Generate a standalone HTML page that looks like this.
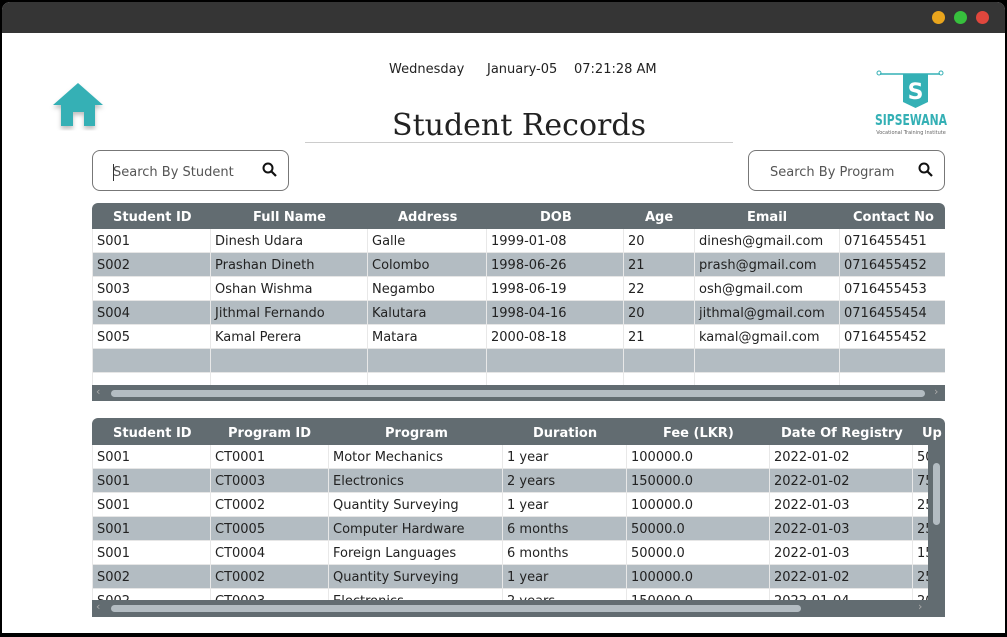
<!DOCTYPE html>
<html><head><meta charset="utf-8"><style>
*{margin:0;padding:0;box-sizing:border-box}
body{width:1007px;height:637px;background:#000;position:relative;overflow:hidden;font-family:"DejaVu Sans","Liberation Sans",sans-serif;font-size:13px;color:#222}
.win{position:absolute;left:2px;top:2px;width:1003px;height:631px;background:#fff;border-radius:8px 8px 0 0;overflow:hidden}
.bar{position:absolute;left:0;top:0;width:100%;height:31px;background:#353535}
.dot{position:absolute;top:9px;width:13px;height:13px;border-radius:50%}
.a{position:absolute}
.tbl{position:absolute;background:#fff;border-radius:6px 6px 0 0;overflow:hidden}
.hd{position:absolute;left:0;top:0;right:0;background:#626c71;color:#fff;font-weight:bold}
.hd span,.row span{position:absolute;top:0;white-space:nowrap}
.row{position:absolute;left:0;right:0;height:24px;border-bottom:1px solid #e6e6e6}
.row.g{background:#b3bcc2}
.row span{line-height:25px;padding-left:4px;border-left:1px solid #e8e8e8;height:24px;overflow:hidden}
.hsb{position:absolute;left:0;right:0;height:17px;background:#626c71}
.thumb{position:absolute;height:7px;top:5px;background:#b3bcc2;border-radius:4px}
.srch{position:absolute;height:41px;border:1px solid #777;border-radius:8px;background:#fff;color:#555}
</style></head><body>
<div class="win">
<div class="bar"></div>
<div class="dot" style="left:930px;background:#e9a51d"></div>
<div class="dot" style="left:952px;background:#37c03d"></div>
<div class="dot" style="left:974px;background:#e0473d"></div>

<div class="a" style="left:387px;top:60px">Wednesday</div>
<div class="a" style="left:485px;top:60px">January-05</div>
<div class="a" style="left:572px;top:60px">07:21:28 AM</div>

<svg class="a" style="left:46px;top:76px" width="64" height="56"><defs><filter id="s"><feDropShadow dx="0" dy="3" stdDeviation="2" flood-opacity="0.25"/></filter></defs>
<path d="M5 27 L30 5 L55 27 L47 27 L47 48 L36 48 L36 34 L25 34 L25 48 L13 48 L13 27 Z" fill="#34b0b5" filter="url(#s)"/></svg>

<div class="a" style="left:300px;top:106px;width:434px;text-align:center;font-family:'DejaVu Serif','Liberation Serif',serif;font-size:30px;color:#222">Student Records</div>
<div class="a" style="left:303px;top:140px;width:428px;height:1px;background:#ccc"></div>

<svg class="a" style="left:868px;top:66px" width="80" height="70">
<path d="M10 6 H70" stroke="#34b0b5" stroke-width="1.5"/><circle cx="9" cy="5" r="2" fill="none" stroke="#34b0b5"/><circle cx="71" cy="5" r="2" fill="none" stroke="#34b0b5"/>
<path d="M33 6 H58 V34 L45.5 40 L33 34 Z" fill="#34b0b5"/>
<text x="45.5" y="31" text-anchor="middle" font-family="DejaVu Sans" font-weight="bold" font-size="22" fill="#fff">S</text>
<text x="5" y="57" font-family="DejaVu Sans" font-weight="bold" font-size="15" fill="#34b0b5" textLength="72" lengthAdjust="spacingAndGlyphs">SIPSEWANA</text>
<text x="41" y="66" text-anchor="middle" font-family="DejaVu Sans" font-size="5" fill="#666">Vocational Training Institute</text>
</svg>

<div class="srch" style="left:90px;top:148px;width:197px"><span class="a" style="left:20px;top:14px">Search By Student</span><span class="a" style="left:20px;top:13px;width:1px;height:17px;background:#333"></span>
<svg class="a" style="left:169px;top:11px" width="16" height="16"><circle cx="6" cy="6" r="4.5" fill="none" stroke="#111" stroke-width="2"/><path d="M9.5 9.5 L14 14" stroke="#111" stroke-width="2.2"/></svg></div>
<div class="srch" style="left:746px;top:148px;width:197px"><span class="a" style="left:21px;top:14px">Search By Program</span>
<svg class="a" style="left:169px;top:11px" width="16" height="16"><circle cx="6" cy="6" r="4.5" fill="none" stroke="#111" stroke-width="2"/><path d="M9.5 9.5 L14 14" stroke="#111" stroke-width="2.2"/></svg></div>

<!-- table 1 -->
<div class="tbl" style="left:90px;top:201px;width:853px;height:198px">
<div class="hd" style="height:26px">
<span style="left:21px;top:7px">Student ID</span><span style="left:161px;top:7px">Full Name</span><span style="left:306px;top:7px">Address</span><span style="left:448px;top:7px">DOB</span><span style="left:553px;top:7px">Age</span><span style="left:655px;top:7px">Email</span><span style="left:761px;top:7px">Contact No</span></div>
<div class="row" style="top:26px"><span style="left:0;width:118px">S001</span><span style="left:118px;width:157px">Dinesh Udara</span><span style="left:275px;width:119px">Galle</span><span style="left:394px;width:137px">1999-01-08</span><span style="left:531px;width:71px">20</span><span style="left:602px;width:145px">dinesh@gmail.com</span><span style="left:747px;width:120px">0716455451</span></div>
<div class="row g" style="top:50px"><span style="left:0;width:118px">S002</span><span style="left:118px;width:157px">Prashan Dineth</span><span style="left:275px;width:119px">Colombo</span><span style="left:394px;width:137px">1998-06-26</span><span style="left:531px;width:71px">21</span><span style="left:602px;width:145px">prash@gmail.com</span><span style="left:747px;width:120px">0716455452</span></div>
<div class="row" style="top:74px"><span style="left:0;width:118px">S003</span><span style="left:118px;width:157px">Oshan Wishma</span><span style="left:275px;width:119px">Negambo</span><span style="left:394px;width:137px">1998-06-19</span><span style="left:531px;width:71px">22</span><span style="left:602px;width:145px">osh@gmail.com</span><span style="left:747px;width:120px">0716455453</span></div>
<div class="row g" style="top:98px"><span style="left:0;width:118px">S004</span><span style="left:118px;width:157px">Jithmal Fernando</span><span style="left:275px;width:119px">Kalutara</span><span style="left:394px;width:137px">1998-04-16</span><span style="left:531px;width:71px">20</span><span style="left:602px;width:145px">jithmal@gmail.com</span><span style="left:747px;width:120px">0716455454</span></div>
<div class="row" style="top:122px"><span style="left:0;width:118px">S005</span><span style="left:118px;width:157px">Kamal Perera</span><span style="left:275px;width:119px">Matara</span><span style="left:394px;width:137px">2000-08-18</span><span style="left:531px;width:71px">21</span><span style="left:602px;width:145px">kamal@gmail.com</span><span style="left:747px;width:120px">0716455452</span></div>
<div class="row g" style="top:146px"><span style="left:0;width:118px"></span><span style="left:118px;width:157px"></span><span style="left:275px;width:119px"></span><span style="left:394px;width:137px"></span><span style="left:531px;width:71px"></span><span style="left:602px;width:145px"></span><span style="left:747px;width:120px"></span></div>
<div class="row" style="top:170px"><span style="left:0;width:118px"></span><span style="left:118px;width:157px"></span><span style="left:275px;width:119px"></span><span style="left:394px;width:137px"></span><span style="left:531px;width:71px"></span><span style="left:602px;width:145px"></span><span style="left:747px;width:120px"></span></div>
<div class="hsb" style="top:182px"><span class="a" style="left:4px;top:0;color:#aaa;font-size:11px">&lsaquo;</span><div class="thumb" style="left:19px;width:814px"></div><span class="a" style="left:842px;top:0;color:#aaa;font-size:11px">&rsaquo;</span></div>
</div>

<!-- table 2 -->
<div class="tbl" style="left:90px;top:416px;width:853px;height:199px">
<div class="hd" style="height:27px">
<span style="left:21px;top:8px">Student ID</span><span style="left:136px;top:8px">Program ID</span><span style="left:293px;top:8px">Program</span><span style="left:441px;top:8px">Duration</span><span style="left:571px;top:8px">Fee (LKR)</span><span style="left:689px;top:8px">Date Of Registry</span><span style="left:830px;top:8px">Up</span></div>
<div class="row" style="top:27px"><span style="left:0;width:118px">S001</span><span style="left:118px;width:118px">CT0001</span><span style="left:236px;width:174px">Motor Mechanics</span><span style="left:410px;width:124px">1 year</span><span style="left:534px;width:143px">100000.0</span><span style="left:677px;width:143px">2022-01-02</span><span style="left:820px;width:40px">50</span></div>
<div class="row g" style="top:51px"><span style="left:0;width:118px">S001</span><span style="left:118px;width:118px">CT0003</span><span style="left:236px;width:174px">Electronics</span><span style="left:410px;width:124px">2 years</span><span style="left:534px;width:143px">150000.0</span><span style="left:677px;width:143px">2022-01-02</span><span style="left:820px;width:40px">75</span></div>
<div class="row" style="top:75px"><span style="left:0;width:118px">S001</span><span style="left:118px;width:118px">CT0002</span><span style="left:236px;width:174px">Quantity Surveying</span><span style="left:410px;width:124px">1 year</span><span style="left:534px;width:143px">100000.0</span><span style="left:677px;width:143px">2022-01-03</span><span style="left:820px;width:40px">25</span></div>
<div class="row g" style="top:99px"><span style="left:0;width:118px">S001</span><span style="left:118px;width:118px">CT0005</span><span style="left:236px;width:174px">Computer Hardware</span><span style="left:410px;width:124px">6 months</span><span style="left:534px;width:143px">50000.0</span><span style="left:677px;width:143px">2022-01-03</span><span style="left:820px;width:40px">25</span></div>
<div class="row" style="top:123px"><span style="left:0;width:118px">S001</span><span style="left:118px;width:118px">CT0004</span><span style="left:236px;width:174px">Foreign Languages</span><span style="left:410px;width:124px">6 months</span><span style="left:534px;width:143px">50000.0</span><span style="left:677px;width:143px">2022-01-03</span><span style="left:820px;width:40px">15</span></div>
<div class="row g" style="top:147px"><span style="left:0;width:118px">S002</span><span style="left:118px;width:118px">CT0002</span><span style="left:236px;width:174px">Quantity Surveying</span><span style="left:410px;width:124px">1 year</span><span style="left:534px;width:143px">100000.0</span><span style="left:677px;width:143px">2022-01-02</span><span style="left:820px;width:40px">25</span></div>
<div class="row" style="top:171px"><span style="left:0;width:118px">S002</span><span style="left:118px;width:118px">CT0003</span><span style="left:236px;width:174px">Electronics</span><span style="left:410px;width:124px">2 years</span><span style="left:534px;width:143px">150000.0</span><span style="left:677px;width:143px">2022-01-04</span><span style="left:820px;width:40px">20</span></div>
<div class="a" style="left:836px;top:27px;width:17px;height:155px;background:#626c71"><div class="a" style="left:5px;top:18px;width:7px;height:62px;background:#b3bcc2;border-radius:4px"></div></div>
<div class="hsb" style="top:182px"><span class="a" style="left:4px;top:0;color:#aaa;font-size:11px">&lsaquo;</span><div class="thumb" style="left:19px;width:690px"></div><span class="a" style="left:826px;top:0;color:#aaa;font-size:11px">&rsaquo;</span></div>
</div>
</div>
</body></html>
